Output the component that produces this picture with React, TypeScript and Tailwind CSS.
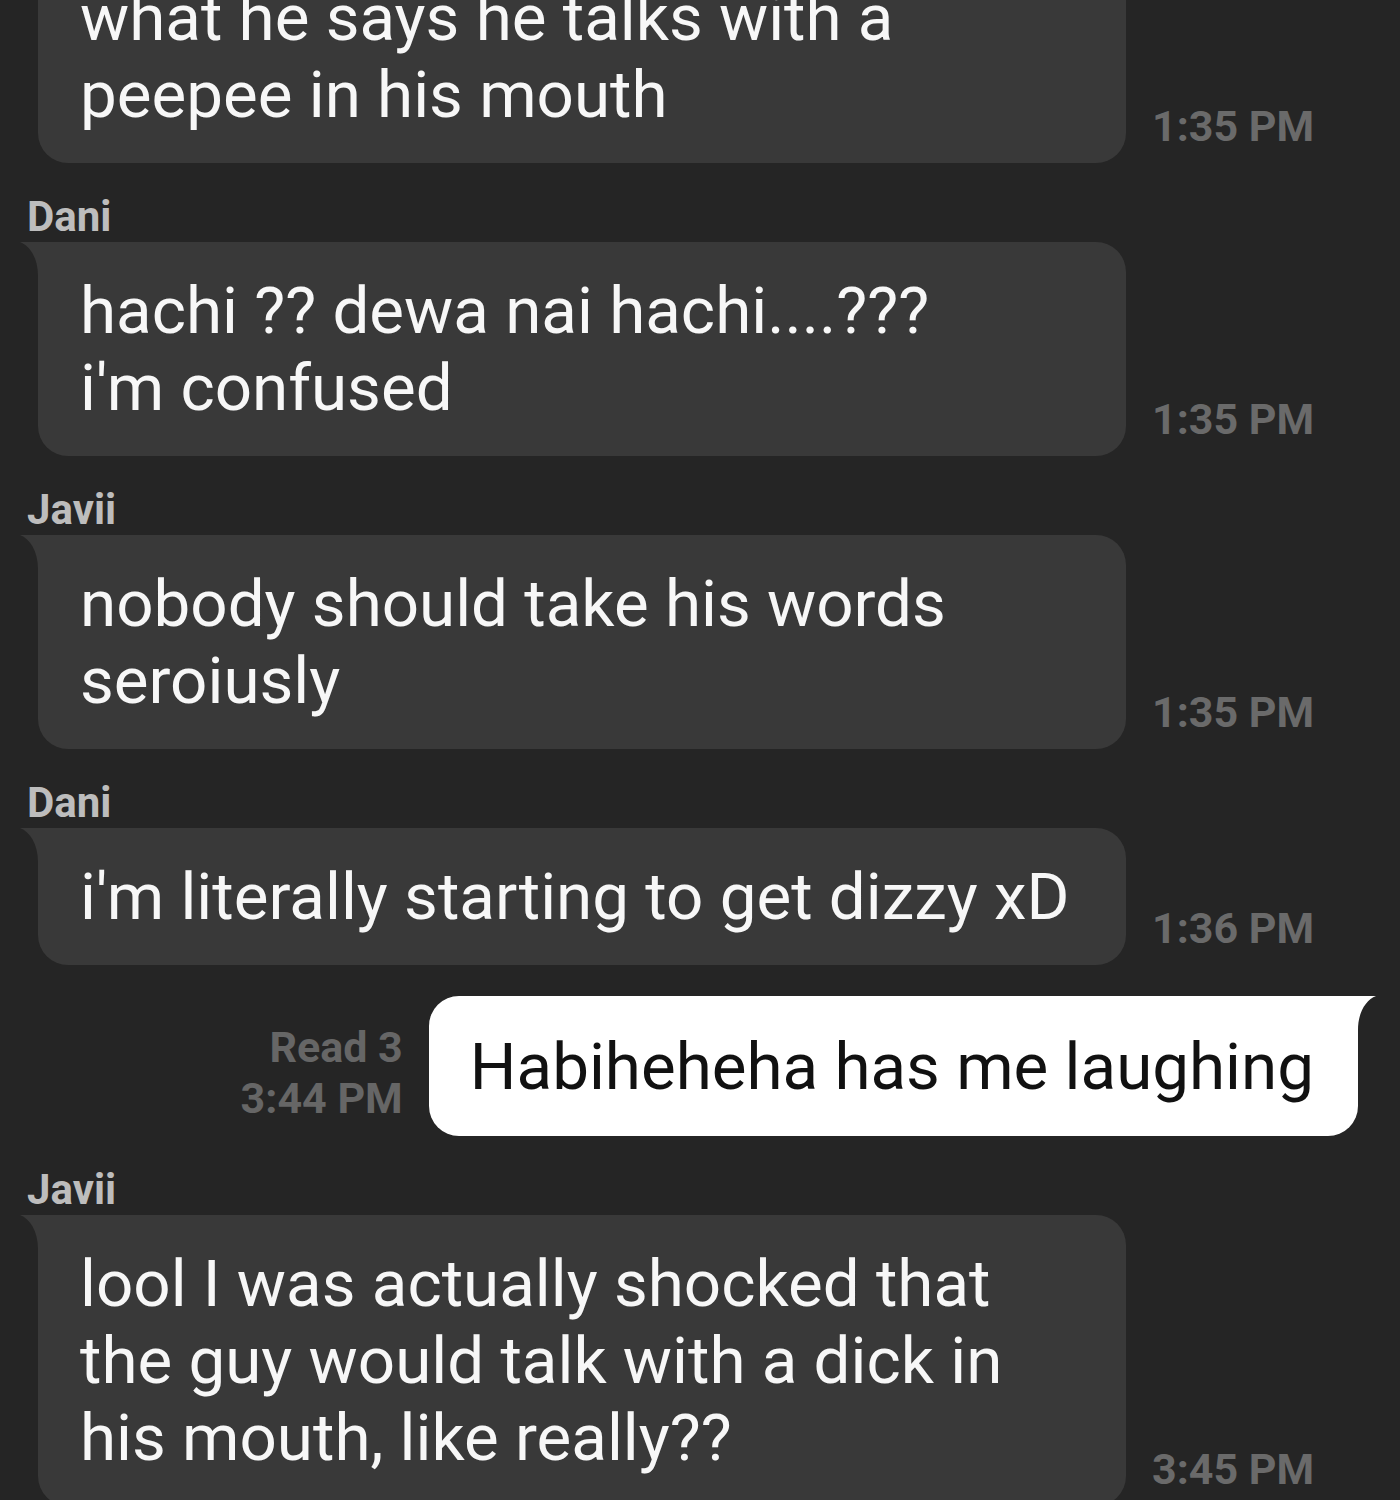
import React from 'react';

type Msg =
  | { kind: 'in'; name?: string; lines: string[]; time: string }
  | { kind: 'out'; lines: string[]; read: string; time: string };

const messages: Msg[] = [
  { kind: 'in', lines: ['what he says he talks with a', 'peepee in his mouth'], time: '1:35 PM' },
  { kind: 'in', name: 'Dani', lines: ['hachi ?? dewa nai hachi....???', "i'm confused"], time: '1:35 PM' },
  { kind: 'in', name: 'Javii', lines: ['nobody should take his words', 'seroiusly'], time: '1:35 PM' },
  { kind: 'in', name: 'Dani', lines: ["i'm literally starting to get dizzy xD"], time: '1:36 PM' },
  { kind: 'out', lines: ['Habiheheha has me laughing'], read: 'Read 3', time: '3:44 PM' },
  {
    kind: 'in',
    name: 'Javii',
    lines: ['lool I was actually shocked that', 'the guy would talk with a dick in', 'his mouth, like really??'],
    time: '3:45 PM',
  },
];

// little hook at the top corner of a bubble
const Tail: React.FC<{ side: 'left' | 'right'; color: string }> = ({ side, color }) => (
  <svg
    width="22"
    height="34"
    viewBox="0 0 22 34"
    className={side === 'left' ? 'absolute left-[-18px] top-0' : 'absolute right-[-18px] top-0 -scale-x-100'}
  >
    <path d="M0 0 H22 V34 H18 C18 16 10 4 0 0 Z" fill={color} />
  </svg>
);

const Incoming: React.FC<{ msg: Extract<Msg, { kind: 'in' }>; first?: boolean }> = ({ msg, first }) => (
  <div>
    {msg.name && (
      <div className="mt-[30px] mb-[1px] pl-[27px] h-[48px] leading-[48px] text-[42px] font-bold text-[#bdbdbd]">
        {msg.name}
      </div>
    )}
    <div className={`flex items-end ${first ? '-mt-[51px]' : ''}`}>
      <div
        className={`relative ml-[38px] w-[1088px] rounded-[30px] bg-[#393939] pl-[42px] pr-[40px] py-[30px] text-[65.5px] leading-[77px] text-[#f7f7f7] whitespace-nowrap ${
          first ? '' : 'rounded-tl-none'
        }`}
      >
        {!first && <Tail side="left" color="#393939" />}
        {msg.lines.map((l, i) => (
          <div key={i}>{l}</div>
        ))}
      </div>
      <div className="ml-[26px] mb-[12px] text-[43px] leading-[50px] font-bold text-[#6a6a6a]">{msg.time}</div>
    </div>
  </div>
);

const Outgoing: React.FC<{ msg: Extract<Msg, { kind: 'out' }> }> = ({ msg }) => (
  <div className="mt-[31px] flex items-end justify-end pr-[42px]">
    <div className="mr-[26px] mb-[12px] text-right text-[43px] leading-[51px] font-bold text-[#666666]">
      <div>{msg.read}</div>
      <div>{msg.time}</div>
    </div>
    <div className="relative rounded-[30px] rounded-tr-none bg-white pl-[41px] pr-[44px] pt-[32px] pb-[31px] text-[65.5px] leading-[77px] text-[#111111] whitespace-nowrap">
      <Tail side="right" color="#ffffff" />
      {msg.lines.map((l, i) => (
        <div key={i}>{l}</div>
      ))}
    </div>
  </div>
);

export default function App() {
  return (
    <div className="w-[1400px] h-[1500px] overflow-hidden bg-[#252525] font-['Roboto',sans-serif]">
      {messages.map((m, i) =>
        m.kind === 'in' ? <Incoming key={i} msg={m} first={i === 0} /> : <Outgoing key={i} msg={m} />
      )}
    </div>
  );
}
